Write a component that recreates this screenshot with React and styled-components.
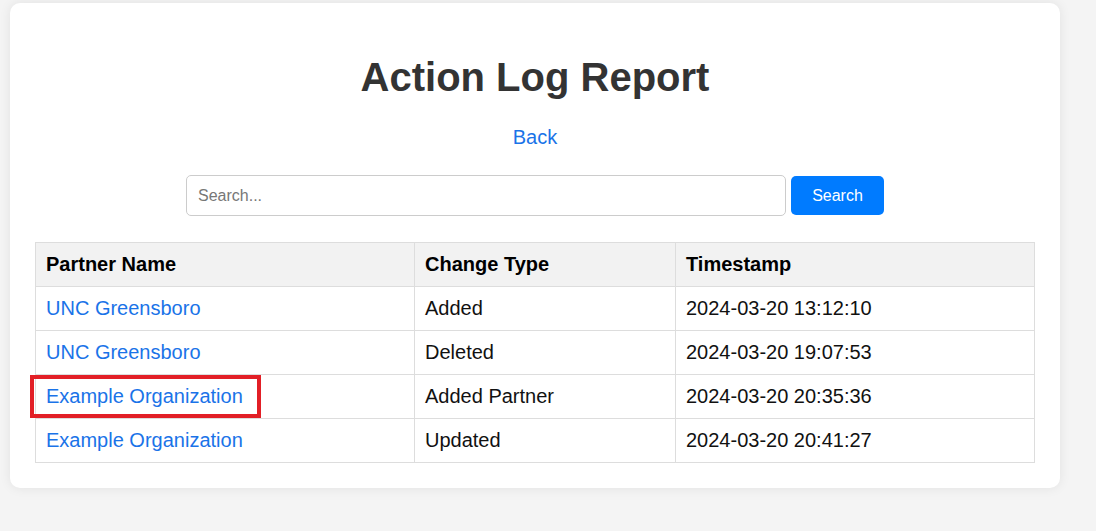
import React from 'react';
import styled, { createGlobalStyle } from 'styled-components';

const rows = [
  { partner: 'UNC Greensboro', change: 'Added', time: '2024-03-20 13:12:10' },
  { partner: 'UNC Greensboro', change: 'Deleted', time: '2024-03-20 19:07:53' },
  { partner: 'Example Organization', change: 'Added Partner', time: '2024-03-20 20:35:36', marked: true },
  { partner: 'Example Organization', change: 'Updated', time: '2024-03-20 20:41:27' }
];

const GlobalStyle = createGlobalStyle`
  body {
    margin: 0;
    background: #f4f4f4;
    font-family: "Liberation Sans", Arial, sans-serif;
  }
`;

const Page = styled.div`
  padding: 3px 0 40px 10px;
`;

const Card = styled.div`
  width: 1000px;
  padding: 0 25px 25px;
  background: #fff;
  border-radius: 10px;
  box-shadow: 0 0 12px rgba(0, 0, 0, 0.08);
  display: flex;
  flex-direction: column;
  align-items: center;
`;

const Title = styled.h1`
  margin: 51px 0 0;
  font-size: 40px;
  line-height: 46px;
  font-weight: 700;
  color: #333;
`;

const BackLink = styled.a`
  margin-top: 26px;
  font-size: 20px;
  line-height: 23px;
  color: #1a73e8;
  text-decoration: none;
`;

const SearchForm = styled.form`
  display: flex;
  align-items: center;
  gap: 5px;
  margin-top: 26px;
`;

const SearchInput = styled.input`
  box-sizing: border-box;
  width: 600px;
  height: 41px;
  padding: 0 11px;
  border: 1px solid #ccc;
  border-radius: 5px;
  font-family: inherit;
  font-size: 16px;
  color: #333;
  &::placeholder {
    color: #777;
  }
`;

const SearchButton = styled.button`
  box-sizing: border-box;
  width: 93px;
  height: 39px;
  border: none;
  border-radius: 5px;
  background: #007bff;
  color: #fff;
  font-family: inherit;
  font-size: 16px;
`;

const TableWrap = styled.div`
  position: relative;
  width: 1000px;
  margin-top: 26px;
`;

const Table = styled.table`
  width: 100%;
  table-layout: fixed;
  border-collapse: collapse;
  font-size: 20px;
  line-height: 23px;
  color: #111;
`;

const Th = styled.th`
  width: ${p => p.$w}px;
  padding: 10px 12px 10px 10px;
  border: 1px solid #ddd;
  background: #f2f2f2;
  text-align: left;
  font-weight: 700;
  color: #000;
`;

const Td = styled.td`
  padding: 10px 12px 10px 10px;
  border: 1px solid #ddd;
`;

const PartnerLink = styled.a`
  color: #1a73e8;
  text-decoration: none;
`;

const Marker = styled.div`
  position: absolute;
  left: -5px;
  top: 133px;
  width: 231px;
  height: 43px;
  box-sizing: border-box;
  border: 4px solid #e21f26;
  pointer-events: none;
`;

export default function App() {
  return (
    <Page>
      <GlobalStyle />
      <Card>
        <Title>Action Log Report</Title>
        <BackLink href="#">Back</BackLink>
        <SearchForm onSubmit={e => e.preventDefault()}>
          <SearchInput type="text" placeholder="Search..." />
          <SearchButton type="submit">Search</SearchButton>
        </SearchForm>
        <TableWrap>
          <Table>
            <thead>
              <tr>
                <Th $w={356}>Partner Name</Th>
                <Th $w={238}>Change Type</Th>
                <Th $w={336}>Timestamp</Th>
              </tr>
            </thead>
            <tbody>
              {rows.map((r, i) => (
                <tr key={i}>
                  <Td>
                    <PartnerLink href="#">{r.partner}</PartnerLink>
                  </Td>
                  <Td>{r.change}</Td>
                  <Td>{r.time}</Td>
                </tr>
              ))}
            </tbody>
          </Table>
          <Marker />
        </TableWrap>
      </Card>
    </Page>
  );
}
